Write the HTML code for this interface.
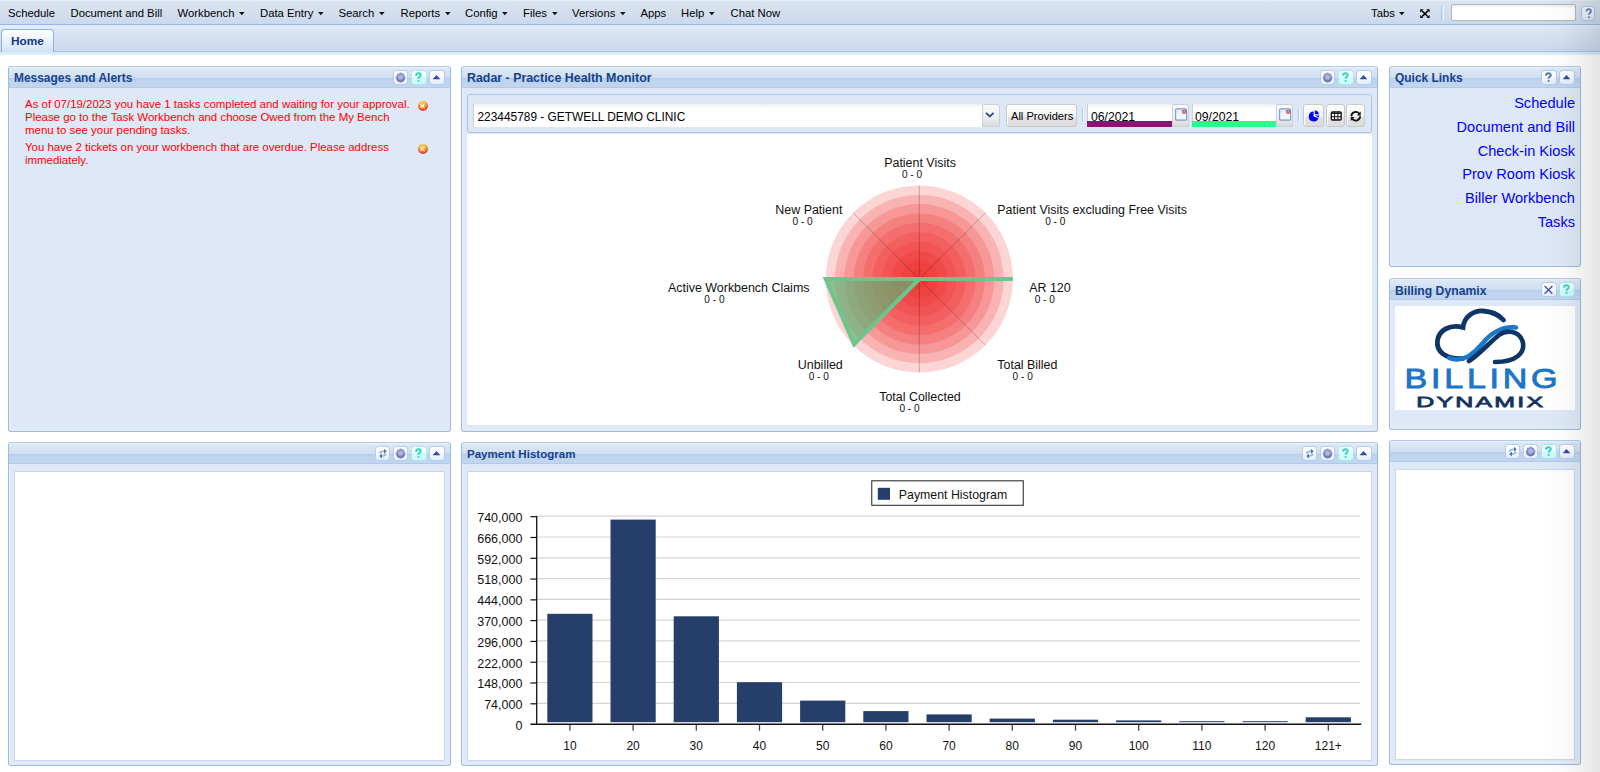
<!DOCTYPE html>
<html><head><meta charset="utf-8"><style>
*{box-sizing:border-box;margin:0;padding:0}
html,body{width:1600px;height:772px;overflow:hidden;background:#fff;font-family:"Liberation Sans",sans-serif;position:relative}
.abs{position:absolute}
#menubar{position:absolute;left:0;top:0;width:1600px;height:25px;background:linear-gradient(#e9eff7 0,#dae4f1 1.5px,#d4dfee 50%,#cbd9ec 100%);border-bottom:1px solid #9ab8e3}
.mi{position:absolute;top:7px;font-size:11.3px;color:#000;white-space:nowrap;line-height:13px}
.arr{position:absolute;top:12.3px;width:6px;height:4px}
#tabstrip{position:absolute;left:0;top:25px;width:1600px;height:30px;background:linear-gradient(#e2edfc 0,#dde9f9 3.5px,#dce6f3 4.5px,#cbd9ee 26px,#a7c2e8 26px,#a7c2e8 27px,#d9e6f8 27px,#e6eefa 30px)}
#tab{position:absolute;left:1px;top:29px;width:53px;height:23px;border:1px solid #8db2e3;border-bottom:none;border-radius:4px 4px 0 0;background:linear-gradient(#fff 0,#f3f8fe 6px,#d2e1f6 100%)}
#tab span{position:absolute;left:9px;top:4px;font-size:11.8px;font-weight:bold;color:#0f3585}
.panel{position:absolute;border:1px solid #99bbe8;border-top-color:#b0caee;border-radius:3px;background:#dfe8f6;overflow:hidden;box-shadow:inset 1px 0 0 rgba(255,255,255,.35),inset 0 -3px 0 rgba(255,255,255,.15)}
.panel .hd{position:absolute;left:0;top:0;right:0;height:21px;background:linear-gradient(#e8f0fa 0,#e8f0fa 1px,#dde8f5 1.6px,#cfdef2 10.8px,#b2caec 10.8px,#b6cdec 11.8px,#bdd2ee 12.2px,#c3d6ef 21px);border-bottom:1px solid #b0c9ec}
.panel .ttl{position:absolute;left:5px;top:4.5px;font-size:11.7px;font-weight:bold;color:#15428b;white-space:nowrap}
.inner{position:absolute;background:#fff;border:1px solid #c9d8ee}
.tools{position:absolute;right:5.4px;top:2.6px;height:16px;white-space:nowrap}
.tbtn{position:relative;display:inline-block;vertical-align:top;width:15.4px;height:15.4px;margin-left:2.7px;border:1px solid #b3cbec;border-radius:3.5px;background:linear-gradient(#ffffff 0,#f7faff 45%,#e2edfc 100%)}
.tbtn.h{border-color:#a2ecec;background:linear-gradient(#ffffff 0,#f4fefe 35%,#d3fafa 55%,#d0f8f8 100%)}
.tbtn svg{position:absolute;left:0;top:0}
.msg{position:absolute;left:16px;font-size:11.45px;line-height:13.1px;color:#f00;width:390px}
.xic{position:absolute;left:408.5px;width:10px;height:10px;border-radius:50%;background:radial-gradient(circle at 45% 22%,#ffd060 0,#ffa020 40%,#f05a30 62%,#b8106a 100%)}
.xic:before,.xic:after{content:"";position:absolute;left:4.3px;top:1.9px;width:1.4px;height:6.2px;background:#fff;transform:rotate(45deg)}
.xic:after{transform:rotate(-45deg)}
.tbar{position:absolute;left:467px;top:94px;width:905px;height:39px;border:1px solid #a9c4ea;border-radius:3px;background:#dde7f5}
.fld{position:absolute;top:103.5px;height:23.5px;background:linear-gradient(#eeeeee 0,#fbfbfb 3px,#fff 5px);border-left:1px solid #cfcfcf}
.trg{position:absolute;top:103.5px;height:23.5px;border:1px solid #cdd0da;border-radius:0 3px 0 0;background:linear-gradient(#fafafa 0,#f1f1f1 55%,#d9d9d9 100%)}
.gbtn{position:absolute;top:103.7px;height:23.5px;border:1px solid #c9c9c9;border-radius:3px;background:linear-gradient(#fcfcfc 0,#f2f2f2 55%,#e1e1e1 55%,#dedede 100%);box-shadow:inset 1px 1px 0 #fff}
.tsep{position:absolute;top:108.6px;width:2px;height:13px;border-left:1px solid #a9cdf5;border-right:1px solid #f4f8fd}
.ftxt{position:absolute;color:#000;white-space:nowrap;line-height:14px}
.bar{position:absolute;top:121.1px;height:5.7px}
.ql{position:absolute;right:25px;font-size:14.6px;color:#0000ff;white-space:nowrap;line-height:17px}
#shade{position:absolute;left:1540px;top:0;width:60px;height:772px;background:linear-gradient(90deg,rgba(0,0,0,0) 0,rgba(0,0,0,.02) 40%,rgba(0,0,0,.1) 100%);pointer-events:none}
</style></head><body>
<div id="menubar">
<span class="mi" style="left:8px">Schedule</span>
<span class="mi" style="left:70.5px">Document and Bill</span>
<span class="mi" style="left:177.5px">Workbench</span>
<svg class="arr" style="left:238.8px" width="6" height="4"><path d="M0 0H5.6L2.8 3.3z" fill="#111"/></svg>
<span class="mi" style="left:260px">Data Entry</span>
<svg class="arr" style="left:317.8px" width="6" height="4"><path d="M0 0H5.6L2.8 3.3z" fill="#111"/></svg>
<span class="mi" style="left:338.5px">Search</span>
<svg class="arr" style="left:378.8px" width="6" height="4"><path d="M0 0H5.6L2.8 3.3z" fill="#111"/></svg>
<span class="mi" style="left:400.5px">Reports</span>
<svg class="arr" style="left:444.8px" width="6" height="4"><path d="M0 0H5.6L2.8 3.3z" fill="#111"/></svg>
<span class="mi" style="left:465px">Config</span>
<svg class="arr" style="left:502.0px" width="6" height="4"><path d="M0 0H5.6L2.8 3.3z" fill="#111"/></svg>
<span class="mi" style="left:523px">Files</span>
<svg class="arr" style="left:551.8px" width="6" height="4"><path d="M0 0H5.6L2.8 3.3z" fill="#111"/></svg>
<span class="mi" style="left:572px">Versions</span>
<svg class="arr" style="left:619.8px" width="6" height="4"><path d="M0 0H5.6L2.8 3.3z" fill="#111"/></svg>
<span class="mi" style="left:640.5px">Apps</span>
<span class="mi" style="left:681px">Help</span>
<svg class="arr" style="left:708.8px" width="6" height="4"><path d="M0 0H5.6L2.8 3.3z" fill="#111"/></svg>
<span class="mi" style="left:730.5px">Chat Now</span>
<span class="mi" style="left:1371px">Tabs</span>
<svg class="arr" style="left:1398.8px" width="6" height="4"><path d="M0 0H5.6L2.8 3.3z" fill="#111"/></svg>
<svg class="abs" style="left:1420.1px;top:8.7px" width="9.8" height="9.5" viewBox="0 0 10.4 10"><path d="M2.2 2.1L8.2 7.9M8.2 2.1L2.2 7.9" stroke="#000" stroke-width="1.75"/><path d="M0.2 0.1h3.6L0.2 3.6z M10.2 0.1h-3.6l3.6 3.5z M0.2 9.9h3.6L0.2 6.4z M10.2 9.9h-3.6l3.6-3.5z" fill="#000"/></svg>
<i class="abs" style="left:1441.2px;top:6px;width:3px;height:14px;border-left:1.6px solid #a6cbf7;border-right:1px solid #eef5fd"></i>
<div class="abs" style="left:1451.2px;top:4.3px;width:124.6px;height:16.8px;background:linear-gradient(#f0f0f0,#fff 4px);border:1px solid #b5b5b5;border-radius:2px"></div>
<i class="tbtn" style="position:absolute;left:1580.5px;top:6.2px;width:14.5px;height:14.5px;margin:0;border-color:#a9c5ea;background:linear-gradient(#fafcff,#dfe9f7)"><svg width="13" height="13" viewBox="0 0 13 13"><path d="M4.3 4.6c0-1.5 1-2.4 2.3-2.4 1.4 0 2.3.8 2.3 2 0 1.5-1.6 1.8-1.8 3v.5" stroke="#5a7fb0" stroke-width="1.8" fill="none"/><circle cx="7.1" cy="10.3" r="1" fill="#5a7fb0"/></svg></i>
</div>
<div id="tabstrip"></div>
<div id="tab"><span>Home</span></div>
<div class="panel" style="left:8px;top:66px;width:443px;height:366px"><div class="hd"><span class="ttl" style="font-size:11.95px;top:4px">Messages and Alerts</span><div class="tools"><i class="tbtn"><svg width="13" height="13" viewBox="0 0 13 13"><g fill="#8790c8"><circle cx="6.6" cy="6.4" r="4.1"/><circle cx="6.6" cy="2.5" r="1.1"/><circle cx="6.6" cy="10.3" r="1.1"/><circle cx="2.7" cy="6.4" r="1.1"/><circle cx="10.5" cy="6.4" r="1.1"/><circle cx="3.9" cy="3.7" r="1"/><circle cx="9.3" cy="3.7" r="1"/><circle cx="3.9" cy="9.1" r="1"/><circle cx="9.3" cy="9.1" r="1"/></g><path d="M2.8 7.4A3.9 3.9 0 0 0 10.4 7.4" stroke="#6d76ae" stroke-width="1.5" fill="none"/><circle cx="6.6" cy="6" r="2.6" fill="#a3aee0"/><circle cx="6.6" cy="5.5" r="1.1" fill="#b9c2e6"/></svg></i><i class="tbtn h"><svg width="13" height="13" viewBox="0 0 13 13"><path d="M3.9 4.6C4 3 5 2.2 6.4 2.2 7.9 2.2 8.8 3 8.8 4.2 8.8 5.6 6.7 5.9 6.6 7.3V7.7" stroke="#2ed6c6" stroke-width="1.9" fill="none"/><circle cx="6.6" cy="10" r="1.1" fill="#2ed6c6"/></svg></i><i class="tbtn"><svg width="13" height="13" viewBox="0 0 13 13"><path d="M2.7 8.3L6.5 3.9 10.3 8.3z" fill="#2d47ab"/></svg></i></div></div></div>
<div class="abs" style="left:9px;top:67px">
<div class="msg" style="top:30.5px">As of 07/19/2023 you have 1 tasks completed and waiting for your approval. Please go to the Task Workbench and choose Owed from the My Bench menu to see your pending tasks.</div>
<i class="xic" style="top:34.4px"></i>
<div class="msg" style="top:73.6px">You have 2 tickets on your workbench that are overdue. Please address immediately.</div>
<i class="xic" style="top:77.4px"></i></div>
<div class="panel" style="left:461px;top:66px;width:917px;height:366px"><div class="hd"><span class="ttl" style="font-size:12.4px;top:4px">Radar - Practice Health Monitor</span><div class="tools"><i class="tbtn"><svg width="13" height="13" viewBox="0 0 13 13"><g fill="#8790c8"><circle cx="6.6" cy="6.4" r="4.1"/><circle cx="6.6" cy="2.5" r="1.1"/><circle cx="6.6" cy="10.3" r="1.1"/><circle cx="2.7" cy="6.4" r="1.1"/><circle cx="10.5" cy="6.4" r="1.1"/><circle cx="3.9" cy="3.7" r="1"/><circle cx="9.3" cy="3.7" r="1"/><circle cx="3.9" cy="9.1" r="1"/><circle cx="9.3" cy="9.1" r="1"/></g><path d="M2.8 7.4A3.9 3.9 0 0 0 10.4 7.4" stroke="#6d76ae" stroke-width="1.5" fill="none"/><circle cx="6.6" cy="6" r="2.6" fill="#a3aee0"/><circle cx="6.6" cy="5.5" r="1.1" fill="#b9c2e6"/></svg></i><i class="tbtn h"><svg width="13" height="13" viewBox="0 0 13 13"><path d="M3.9 4.6C4 3 5 2.2 6.4 2.2 7.9 2.2 8.8 3 8.8 4.2 8.8 5.6 6.7 5.9 6.6 7.3V7.7" stroke="#2ed6c6" stroke-width="1.9" fill="none"/><circle cx="6.6" cy="10" r="1.1" fill="#2ed6c6"/></svg></i><i class="tbtn"><svg width="13" height="13" viewBox="0 0 13 13"><path d="M2.7 8.3L6.5 3.9 10.3 8.3z" fill="#2d47ab"/></svg></i></div></div></div>
<div class="panel" style="left:1389px;top:66px;width:192px;height:201px"><div class="hd"><span class="ttl" style="font-size:11.95px;top:4px">Quick Links</span><div class="tools"><i class="tbtn"><svg width="13" height="13" viewBox="0 0 13 13"><path d="M3.9 4.6C4 3 5 2.2 6.4 2.2 7.9 2.2 8.8 3 8.8 4.2 8.8 5.6 6.7 5.9 6.6 7.3V7.7" stroke="#5b7db0" stroke-width="1.9" fill="none"/><circle cx="6.6" cy="10" r="1.1" fill="#5b7db0"/></svg></i><i class="tbtn"><svg width="13" height="13" viewBox="0 0 13 13"><path d="M2.7 8.3L6.5 3.9 10.3 8.3z" fill="#2d47ab"/></svg></i></div></div></div>
<div class="panel" style="left:1389px;top:278px;width:192px;height:152px"><div class="hd"><span class="ttl" style="font-size:12.2px;top:4.5px">Billing Dynamix</span><div class="tools"><i class="tbtn"><svg width="13" height="13.5" viewBox="0 0 13 13.5"><path d="M2.6 3L10.4 10.8M10.4 3L2.6 10.8" stroke="#4a58a6" stroke-width="1.5"/></svg></i><i class="tbtn h"><svg width="13" height="13" viewBox="0 0 13 13"><path d="M3.9 4.6C4 3 5 2.2 6.4 2.2 7.9 2.2 8.8 3 8.8 4.2 8.8 5.6 6.7 5.9 6.6 7.3V7.7" stroke="#2ed6c6" stroke-width="1.9" fill="none"/><circle cx="6.6" cy="10" r="1.1" fill="#2ed6c6"/></svg></i></div></div></div>
<div class="panel" style="left:8px;top:442px;width:443px;height:324px"><div class="hd"><div class="tools"><i class="tbtn"><svg width="13" height="13" viewBox="0 0 13 13"><path d="M3.2 6.3Q4.8 3.9 8.4 4.3" stroke="#93b4d8" stroke-width="1.7" fill="none"/><path d="M8 1.8L10.7 4.3 8 6.9z" fill="#4677b0"/><path d="M10.2 7.1Q8.6 9.4 5.2 8.9" stroke="#93b4d8" stroke-width="1.7" fill="none"/><path d="M6 6.5L3.2 8.9 6 11.4z" fill="#4677b0"/></svg></i><i class="tbtn"><svg width="13" height="13" viewBox="0 0 13 13"><g fill="#8790c8"><circle cx="6.6" cy="6.4" r="4.1"/><circle cx="6.6" cy="2.5" r="1.1"/><circle cx="6.6" cy="10.3" r="1.1"/><circle cx="2.7" cy="6.4" r="1.1"/><circle cx="10.5" cy="6.4" r="1.1"/><circle cx="3.9" cy="3.7" r="1"/><circle cx="9.3" cy="3.7" r="1"/><circle cx="3.9" cy="9.1" r="1"/><circle cx="9.3" cy="9.1" r="1"/></g><path d="M2.8 7.4A3.9 3.9 0 0 0 10.4 7.4" stroke="#6d76ae" stroke-width="1.5" fill="none"/><circle cx="6.6" cy="6" r="2.6" fill="#a3aee0"/><circle cx="6.6" cy="5.5" r="1.1" fill="#b9c2e6"/></svg></i><i class="tbtn h"><svg width="13" height="13" viewBox="0 0 13 13"><path d="M3.9 4.6C4 3 5 2.2 6.4 2.2 7.9 2.2 8.8 3 8.8 4.2 8.8 5.6 6.7 5.9 6.6 7.3V7.7" stroke="#2ed6c6" stroke-width="1.9" fill="none"/><circle cx="6.6" cy="10" r="1.1" fill="#2ed6c6"/></svg></i><i class="tbtn"><svg width="13" height="13" viewBox="0 0 13 13"><path d="M2.7 8.3L6.5 3.9 10.3 8.3z" fill="#2d47ab"/></svg></i></div></div><div class="inner" style="left:5px;top:28px;width:431px;height:290px"></div></div>
<div class="panel" style="left:461px;top:442px;width:917px;height:324px"><div class="hd"><span class="ttl" style="font-size:11.55px;top:4.5px">Payment Histogram</span><div class="tools"><i class="tbtn"><svg width="13" height="13" viewBox="0 0 13 13"><path d="M3.2 6.3Q4.8 3.9 8.4 4.3" stroke="#93b4d8" stroke-width="1.7" fill="none"/><path d="M8 1.8L10.7 4.3 8 6.9z" fill="#4677b0"/><path d="M10.2 7.1Q8.6 9.4 5.2 8.9" stroke="#93b4d8" stroke-width="1.7" fill="none"/><path d="M6 6.5L3.2 8.9 6 11.4z" fill="#4677b0"/></svg></i><i class="tbtn"><svg width="13" height="13" viewBox="0 0 13 13"><g fill="#8790c8"><circle cx="6.6" cy="6.4" r="4.1"/><circle cx="6.6" cy="2.5" r="1.1"/><circle cx="6.6" cy="10.3" r="1.1"/><circle cx="2.7" cy="6.4" r="1.1"/><circle cx="10.5" cy="6.4" r="1.1"/><circle cx="3.9" cy="3.7" r="1"/><circle cx="9.3" cy="3.7" r="1"/><circle cx="3.9" cy="9.1" r="1"/><circle cx="9.3" cy="9.1" r="1"/></g><path d="M2.8 7.4A3.9 3.9 0 0 0 10.4 7.4" stroke="#6d76ae" stroke-width="1.5" fill="none"/><circle cx="6.6" cy="6" r="2.6" fill="#a3aee0"/><circle cx="6.6" cy="5.5" r="1.1" fill="#b9c2e6"/></svg></i><i class="tbtn h"><svg width="13" height="13" viewBox="0 0 13 13"><path d="M3.9 4.6C4 3 5 2.2 6.4 2.2 7.9 2.2 8.8 3 8.8 4.2 8.8 5.6 6.7 5.9 6.6 7.3V7.7" stroke="#2ed6c6" stroke-width="1.9" fill="none"/><circle cx="6.6" cy="10" r="1.1" fill="#2ed6c6"/></svg></i><i class="tbtn"><svg width="13" height="13" viewBox="0 0 13 13"><path d="M2.7 8.3L6.5 3.9 10.3 8.3z" fill="#2d47ab"/></svg></i></div></div><div class="inner" style="left:5px;top:28px;width:905px;height:290px"></div></div>
<div class="panel" style="left:1389px;top:440px;width:192px;height:325px"><div class="hd"><div class="tools"><i class="tbtn"><svg width="13" height="13" viewBox="0 0 13 13"><path d="M3.2 6.3Q4.8 3.9 8.4 4.3" stroke="#93b4d8" stroke-width="1.7" fill="none"/><path d="M8 1.8L10.7 4.3 8 6.9z" fill="#4677b0"/><path d="M10.2 7.1Q8.6 9.4 5.2 8.9" stroke="#93b4d8" stroke-width="1.7" fill="none"/><path d="M6 6.5L3.2 8.9 6 11.4z" fill="#4677b0"/></svg></i><i class="tbtn"><svg width="13" height="13" viewBox="0 0 13 13"><g fill="#8790c8"><circle cx="6.6" cy="6.4" r="4.1"/><circle cx="6.6" cy="2.5" r="1.1"/><circle cx="6.6" cy="10.3" r="1.1"/><circle cx="2.7" cy="6.4" r="1.1"/><circle cx="10.5" cy="6.4" r="1.1"/><circle cx="3.9" cy="3.7" r="1"/><circle cx="9.3" cy="3.7" r="1"/><circle cx="3.9" cy="9.1" r="1"/><circle cx="9.3" cy="9.1" r="1"/></g><path d="M2.8 7.4A3.9 3.9 0 0 0 10.4 7.4" stroke="#6d76ae" stroke-width="1.5" fill="none"/><circle cx="6.6" cy="6" r="2.6" fill="#a3aee0"/><circle cx="6.6" cy="5.5" r="1.1" fill="#b9c2e6"/></svg></i><i class="tbtn h"><svg width="13" height="13" viewBox="0 0 13 13"><path d="M3.9 4.6C4 3 5 2.2 6.4 2.2 7.9 2.2 8.8 3 8.8 4.2 8.8 5.6 6.7 5.9 6.6 7.3V7.7" stroke="#2ed6c6" stroke-width="1.9" fill="none"/><circle cx="6.6" cy="10" r="1.1" fill="#2ed6c6"/></svg></i><i class="tbtn"><svg width="13" height="13" viewBox="0 0 13 13"><path d="M2.7 8.3L6.5 3.9 10.3 8.3z" fill="#2d47ab"/></svg></i></div></div><div class="inner" style="left:5px;top:28px;width:180px;height:291px"></div></div>

<div class="tbar"></div>
<div class="abs" style="left:467px;top:133.5px;width:905px;height:291.5px;background:#fff"></div>
<div class="fld" style="left:473px;width:508.5px"></div>
<span class="ftxt" style="left:477.5px;top:109.7px;font-size:11.9px">223445789 - GETWELL DEMO CLINIC</span>
<div class="trg" style="left:981.5px;width:18px"><svg width="16" height="22" style="position:absolute;left:0;top:0"><path d="M3 7.9L6.8 11.4 10.6 7.9" stroke="#2c4f8c" stroke-width="1.9" fill="none"/></svg></div>
<div class="gbtn" style="left:1005.7px;width:71px"></div>
<span class="ftxt" style="left:1011px;top:108.6px;font-size:11.1px">All Providers</span>
<i class="tsep" style="left:1082px"></i>
<div class="fld" style="left:1087.4px;width:84.6px"></div>
<div class="bar" style="left:1087.4px;width:84.6px;background:#8a1470"></div>
<span class="ftxt" style="left:1091px;top:110.3px;font-size:12.2px">06/2021</span>
<div class="trg" style="left:1172px;width:17.4px"><svg width="16" height="22" style="position:absolute;left:0;top:0"><rect x="2.6" y="3.8" width="11" height="11.4" rx="1" fill="#e8eef8" stroke="#7d9bcb" stroke-width="1.2"/><path d="M5 7v7M8 7v7M11 7v7M3 9.5h10M3 12h10" stroke="#fff" stroke-width=".8"/><circle cx="11.1" cy="6.8" r="1.5" fill="none" stroke="#c63a3a" stroke-width="1.2"/></svg></div>
<div class="fld" style="left:1191.6px;width:84.4px"></div>
<div class="bar" style="left:1191.6px;width:84.4px;background:#2bfb8a"></div>
<span class="ftxt" style="left:1195px;top:110.1px;font-size:12.2px">09/2021</span>
<div class="trg" style="left:1276px;width:17.3px"><svg width="16" height="22" style="position:absolute;left:0;top:0"><rect x="2.6" y="3.8" width="11" height="11.4" rx="1" fill="#e8eef8" stroke="#7d9bcb" stroke-width="1.2"/><path d="M5 7v7M8 7v7M11 7v7M3 9.5h10M3 12h10" stroke="#fff" stroke-width=".8"/><circle cx="11.1" cy="6.8" r="1.5" fill="none" stroke="#c63a3a" stroke-width="1.2"/></svg></div>
<i class="tsep" style="left:1298px"></i>
<div class="gbtn" style="left:1303.4px;width:21px"><svg width="20" height="22" style="position:absolute;left:0;top:0"><path d="M9.6 6.4A5 5 0 1 0 14.4 13.2L9.6 11.4z" fill="#0000ff"/><path d="M10.8 5.3A4.8 4.8 0 0 1 15 9.2L10.8 9.2z" fill="#0000ff"/><path d="M10.8 10.4L15.2 10.4 14.8 12.6z" fill="#0000ff"/></svg></div>
<div class="gbtn" style="left:1325.7px;width:19.5px"><svg width="19" height="22" style="position:absolute;left:0;top:0"><rect x="4.3" y="6.9" width="9.9" height="8.1" rx="1.2" fill="none" stroke="#111" stroke-width="1.3"/><path d="M4.3 8.2h9.9" stroke="#111" stroke-width="1.4"/><path d="M4.3 11.6h9.9M7.5 7v8M10.9 7v8" stroke="#111" stroke-width="0.9"/></svg></div>
<div class="gbtn" style="left:1346.4px;width:19px"><svg width="18" height="22" style="position:absolute;left:0;top:0"><path d="M4.35 11.25A4.4 4.4 0 0 1 12.2 8.6" stroke="#111" stroke-width="1.8" fill="none"/><path d="M13.7 6.6L13.7 10.7 10.1 10.3z" fill="#111"/><path d="M13.15 11.25A4.4 4.4 0 0 1 5.3 13.9" stroke="#111" stroke-width="1.8" fill="none"/><path d="M3.8 15.9L3.8 11.8 7.4 12.2z" fill="#111"/></svg></div>

<svg class="abs" style="left:0;top:0" width="1600" height="772" font-family="Liberation Sans" fill="#111"><circle cx="919.3" cy="279" r="93.60" fill="#ee2222" fill-opacity="0.19"/><circle cx="919.3" cy="279" r="84.24" fill="#ee2222" fill-opacity="0.19"/><circle cx="919.3" cy="279" r="74.88" fill="#ee2222" fill-opacity="0.19"/><circle cx="919.3" cy="279" r="65.52" fill="#ee2222" fill-opacity="0.19"/><circle cx="919.3" cy="279" r="56.16" fill="#ee2222" fill-opacity="0.19"/><circle cx="919.3" cy="279" r="46.80" fill="#ee2222" fill-opacity="0.19"/><circle cx="919.3" cy="279" r="37.44" fill="#ee2222" fill-opacity="0.19"/><circle cx="919.3" cy="279" r="28.08" fill="#ee2222" fill-opacity="0.19"/><circle cx="919.3" cy="279" r="18.72" fill="#ee2222" fill-opacity="0.19"/><circle cx="919.3" cy="279" r="9.36" fill="#ee2222" fill-opacity="0.19"/><line x1="919.3" y1="279" x2="1012.90" y2="279.00" stroke="#000" stroke-opacity="0.22" stroke-width="1"/><line x1="919.3" y1="279" x2="985.49" y2="345.19" stroke="#000" stroke-opacity="0.22" stroke-width="1"/><line x1="919.3" y1="279" x2="919.30" y2="372.60" stroke="#000" stroke-opacity="0.22" stroke-width="1"/><line x1="919.3" y1="279" x2="853.11" y2="345.19" stroke="#000" stroke-opacity="0.22" stroke-width="1"/><line x1="919.3" y1="279" x2="825.70" y2="279.00" stroke="#000" stroke-opacity="0.22" stroke-width="1"/><line x1="919.3" y1="279" x2="853.11" y2="212.81" stroke="#000" stroke-opacity="0.22" stroke-width="1"/><line x1="919.3" y1="279" x2="919.30" y2="185.40" stroke="#000" stroke-opacity="0.22" stroke-width="1"/><line x1="919.3" y1="279" x2="985.49" y2="212.81" stroke="#000" stroke-opacity="0.22" stroke-width="1"/><path d="M919.3 279 L1012.90 279 L919.3 279 L854.11 344.19 L825.70 279 Z" fill="#5db274" fill-opacity="0.68" stroke="#6cc68c" stroke-width="4" stroke-linejoin="miter"/><text x="884.2" y="166.8" font-size="12.45">Patient Visits</text><text x="901.9" y="177.8" font-size="10.1">0 - 0</text><text x="775.3" y="214.4" font-size="12.45">New Patient</text><text x="792.4" y="225.2" font-size="10.1">0 - 0</text><text x="997.3" y="214.4" font-size="12.45">Patient Visits excluding Free Visits</text><text x="1045.2" y="225.2" font-size="10.1">0 - 0</text><text x="668" y="291.6" font-size="12.45">Active Workbench Claims</text><text x="704.3" y="302.5" font-size="10.1">0 - 0</text><text x="1029.2" y="291.6" font-size="12.45">AR 120</text><text x="1034.7" y="302.5" font-size="10.1">0 - 0</text><text x="797.8" y="369.2" font-size="12.45">Unbilled</text><text x="808.7" y="380.1" font-size="10.1">0 - 0</text><text x="997.3" y="369.2" font-size="12.45">Total Billed</text><text x="1012.6" y="380.1" font-size="10.1">0 - 0</text><text x="879.2" y="401.2" font-size="12.45">Total Collected</text><text x="899.4" y="412.1" font-size="10.1">0 - 0</text></svg>
<span class="ql" style="top:95.14px">Schedule</span>
<span class="ql" style="top:119.04px">Document and Bill</span>
<span class="ql" style="top:142.74px">Check-in Kiosk</span>
<span class="ql" style="top:166.34px">Prov Room Kiosk</span>
<span class="ql" style="top:190.24px">Biller Workbench</span>
<span class="ql" style="top:213.94px">Tasks</span>
<div class="abs" style="left:1395px;top:305.8px;width:180px;height:104px;background:#fff"></div>
<svg class="abs" style="left:1395px;top:300px" width="185" height="112" viewBox="0 0 185 112">
 <path d="M68 58.5C50 59.5 41 51 42.5 40.5 44 30 55 24 68 27.5 69 17 78 10.5 88 11 97 11.5 104 15 108.5 20" stroke="#0f3566" stroke-width="4.8" fill="none" stroke-linecap="round"/>
 <path d="M54 58C66 63 78 55 87 44 96 33 106 26 121 27.5" stroke="#1b78cc" stroke-width="4.6" fill="none" stroke-linecap="round"/>
 <path d="M74 61C85 54 95 42 104 35 112 29 124 31 127.5 41 131 53 121 62 100 62" stroke="#0f3566" stroke-width="4.6" fill="none" stroke-linecap="round"/>
 <text x="0" y="0" font-family="Liberation Sans" font-size="28.4" fill="#1b75c9" stroke="#1b75c9" stroke-width="0.9" letter-spacing="3.1" transform="translate(9.6 87.5) scale(1.2 1)">BILLING</text>
 <text x="0" y="0" font-family="Liberation Sans" font-size="14.5" fill="#15345f" stroke="#15345f" stroke-width="0.75" letter-spacing="1.3" transform="translate(21.2 106.8) scale(1.72 1)">DYNAMIX</text>
</svg>
<svg class="abs" style="left:0;top:0" width="1600" height="772" font-family="Liberation Sans" fill="#111"><line x1="536" y1="703.31" x2="1360" y2="703.31" stroke="#d4d4d4" stroke-width="1.2"/><line x1="530.4" y1="703.81" x2="536.7" y2="703.81" stroke="#111" stroke-width="1.2"/><line x1="536" y1="682.52" x2="1360" y2="682.52" stroke="#d4d4d4" stroke-width="1.2"/><line x1="530.4" y1="683.02" x2="536.7" y2="683.02" stroke="#111" stroke-width="1.2"/><line x1="536" y1="661.73" x2="1360" y2="661.73" stroke="#d4d4d4" stroke-width="1.2"/><line x1="530.4" y1="662.23" x2="536.7" y2="662.23" stroke="#111" stroke-width="1.2"/><line x1="536" y1="640.94" x2="1360" y2="640.94" stroke="#d4d4d4" stroke-width="1.2"/><line x1="530.4" y1="641.44" x2="536.7" y2="641.44" stroke="#111" stroke-width="1.2"/><line x1="536" y1="620.15" x2="1360" y2="620.15" stroke="#d4d4d4" stroke-width="1.2"/><line x1="530.4" y1="620.65" x2="536.7" y2="620.65" stroke="#111" stroke-width="1.2"/><line x1="536" y1="599.36" x2="1360" y2="599.36" stroke="#d4d4d4" stroke-width="1.2"/><line x1="530.4" y1="599.86" x2="536.7" y2="599.86" stroke="#111" stroke-width="1.2"/><line x1="536" y1="578.57" x2="1360" y2="578.57" stroke="#d4d4d4" stroke-width="1.2"/><line x1="530.4" y1="579.07" x2="536.7" y2="579.07" stroke="#111" stroke-width="1.2"/><line x1="536" y1="557.78" x2="1360" y2="557.78" stroke="#d4d4d4" stroke-width="1.2"/><line x1="530.4" y1="558.28" x2="536.7" y2="558.28" stroke="#111" stroke-width="1.2"/><line x1="536" y1="536.99" x2="1360" y2="536.99" stroke="#d4d4d4" stroke-width="1.2"/><line x1="530.4" y1="537.49" x2="536.7" y2="537.49" stroke="#111" stroke-width="1.2"/><line x1="536" y1="516.20" x2="1360" y2="516.20" stroke="#d4d4d4" stroke-width="1.2"/><line x1="530.4" y1="516.70" x2="536.7" y2="516.70" stroke="#111" stroke-width="1.2"/><text x="522.4" y="522.10" text-anchor="end" font-size="12.5">740,000</text><text x="522.4" y="542.89" text-anchor="end" font-size="12.5">666,000</text><text x="522.4" y="563.68" text-anchor="end" font-size="12.5">592,000</text><text x="522.4" y="584.47" text-anchor="end" font-size="12.5">518,000</text><text x="522.4" y="605.26" text-anchor="end" font-size="12.5">444,000</text><text x="522.4" y="626.05" text-anchor="end" font-size="12.5">370,000</text><text x="522.4" y="646.84" text-anchor="end" font-size="12.5">296,000</text><text x="522.4" y="667.63" text-anchor="end" font-size="12.5">222,000</text><text x="522.4" y="688.42" text-anchor="end" font-size="12.5">148,000</text><text x="522.4" y="709.21" text-anchor="end" font-size="12.5">74,000</text><text x="522.4" y="730.00" text-anchor="end" font-size="12.5">0</text><rect x="547.30" y="613.8" width="45.2" height="108.40" fill="#253e6a"/><line x1="569.90" y1="724" x2="569.90" y2="730.8" stroke="#444" stroke-width="1.3"/><text x="569.90" y="749.7" text-anchor="middle" font-size="12">10</text><rect x="610.50" y="519.6" width="45.2" height="202.60" fill="#253e6a"/><line x1="633.10" y1="724" x2="633.10" y2="730.8" stroke="#444" stroke-width="1.3"/><text x="633.10" y="749.7" text-anchor="middle" font-size="12">20</text><rect x="673.70" y="616.3" width="45.2" height="105.90" fill="#253e6a"/><line x1="696.30" y1="724" x2="696.30" y2="730.8" stroke="#444" stroke-width="1.3"/><text x="696.30" y="749.7" text-anchor="middle" font-size="12">30</text><rect x="736.90" y="682.2" width="45.2" height="40.00" fill="#253e6a"/><line x1="759.50" y1="724" x2="759.50" y2="730.8" stroke="#444" stroke-width="1.3"/><text x="759.50" y="749.7" text-anchor="middle" font-size="12">40</text><rect x="800.10" y="700.6" width="45.2" height="21.60" fill="#253e6a"/><line x1="822.70" y1="724" x2="822.70" y2="730.8" stroke="#444" stroke-width="1.3"/><text x="822.70" y="749.7" text-anchor="middle" font-size="12">50</text><rect x="863.30" y="711.1" width="45.2" height="11.10" fill="#253e6a"/><line x1="885.90" y1="724" x2="885.90" y2="730.8" stroke="#444" stroke-width="1.3"/><text x="885.90" y="749.7" text-anchor="middle" font-size="12">60</text><rect x="926.50" y="714.4" width="45.2" height="7.80" fill="#253e6a"/><line x1="949.10" y1="724" x2="949.10" y2="730.8" stroke="#444" stroke-width="1.3"/><text x="949.10" y="749.7" text-anchor="middle" font-size="12">70</text><rect x="989.70" y="718.6" width="45.2" height="3.60" fill="#253e6a"/><line x1="1012.30" y1="724" x2="1012.30" y2="730.8" stroke="#444" stroke-width="1.3"/><text x="1012.30" y="749.7" text-anchor="middle" font-size="12">80</text><rect x="1052.90" y="719.7" width="45.2" height="2.50" fill="#253e6a"/><line x1="1075.50" y1="724" x2="1075.50" y2="730.8" stroke="#444" stroke-width="1.3"/><text x="1075.50" y="749.7" text-anchor="middle" font-size="12">90</text><rect x="1116.10" y="720.4" width="45.2" height="1.80" fill="#253e6a"/><line x1="1138.70" y1="724" x2="1138.70" y2="730.8" stroke="#444" stroke-width="1.3"/><text x="1138.70" y="749.7" text-anchor="middle" font-size="12">100</text><rect x="1179.30" y="721.2" width="45.2" height="1.00" fill="#253e6a"/><line x1="1201.90" y1="724" x2="1201.90" y2="730.8" stroke="#444" stroke-width="1.3"/><text x="1201.90" y="749.7" text-anchor="middle" font-size="12">110</text><rect x="1242.50" y="721.2" width="45.2" height="1.00" fill="#253e6a"/><line x1="1265.10" y1="724" x2="1265.10" y2="730.8" stroke="#444" stroke-width="1.3"/><text x="1265.10" y="749.7" text-anchor="middle" font-size="12">120</text><rect x="1305.70" y="717.3" width="45.2" height="4.90" fill="#253e6a"/><line x1="1328.30" y1="724" x2="1328.30" y2="730.8" stroke="#444" stroke-width="1.3"/><text x="1328.30" y="749.7" text-anchor="middle" font-size="12">121+</text><line x1="536.7" y1="516" x2="536.7" y2="724.9" stroke="#111" stroke-width="1.3"/><line x1="530.4" y1="724.3" x2="1361.3" y2="724.3" stroke="#111" stroke-width="1.6"/><rect x="871.75" y="480.8" width="151.5" height="24.5" fill="#fff" stroke="#333" stroke-width="1.1"/><rect x="877.8" y="487.8" width="12.2" height="12" fill="#253e6a"/><text x="898.8" y="498.7" font-size="12.35">Payment Histogram</text></svg>
<div id="shade"></div>
</body></html>
